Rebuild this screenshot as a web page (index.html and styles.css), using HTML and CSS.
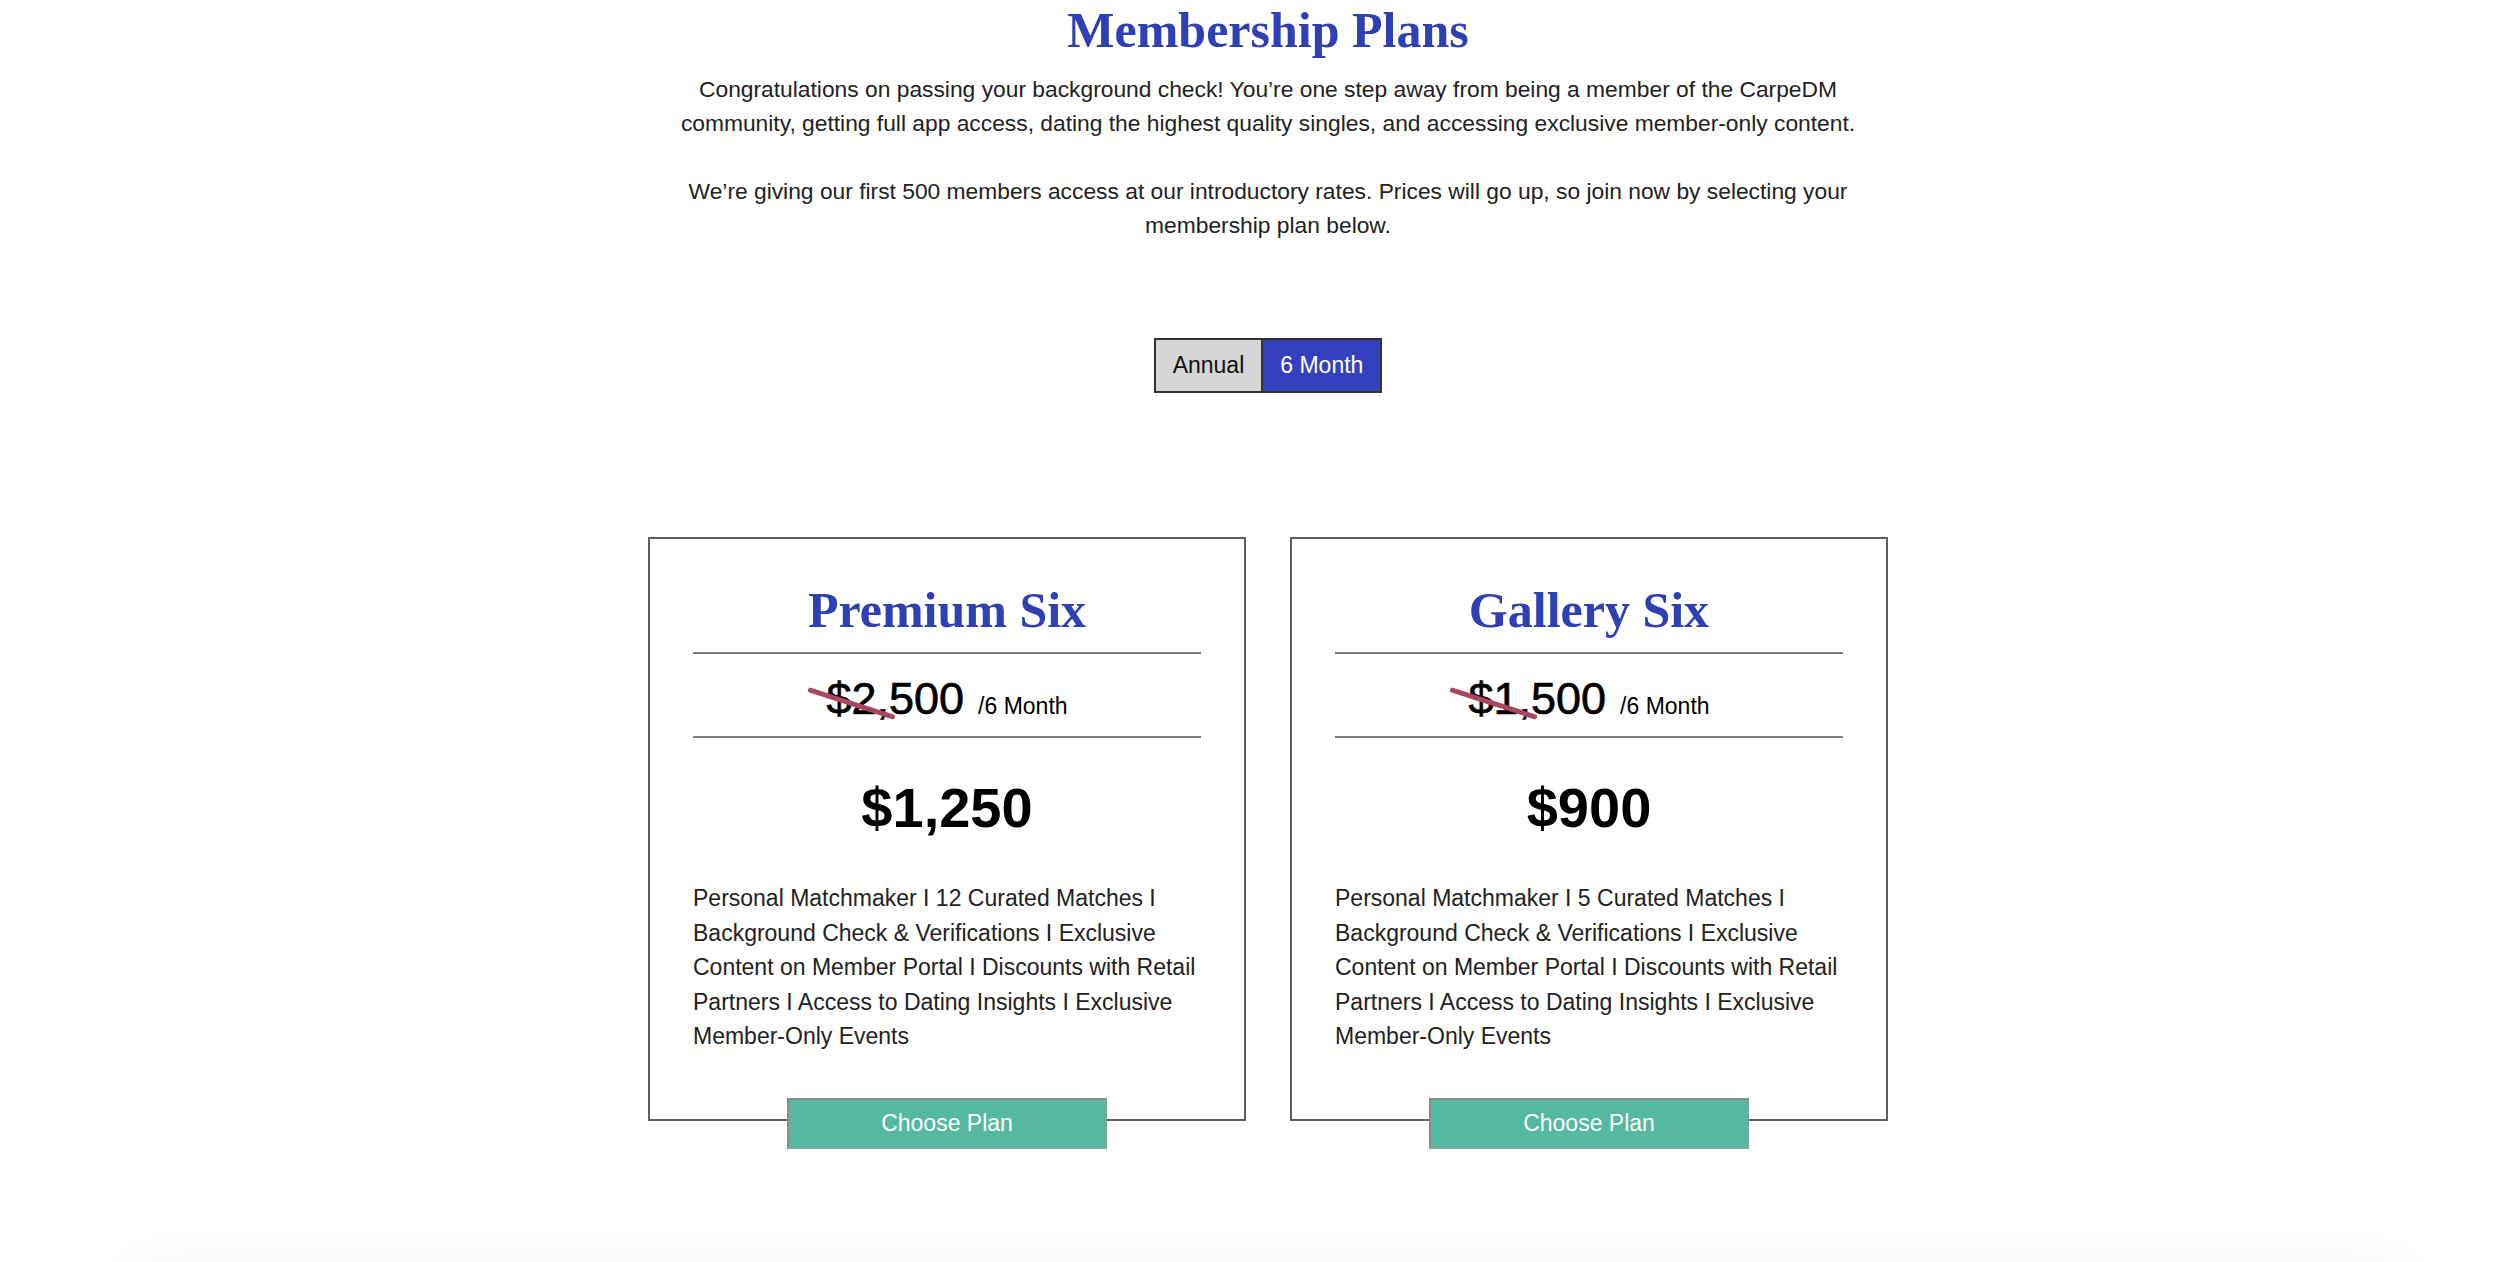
FILE: index.html
```html
<!DOCTYPE html>
<html lang="en">
<head>
    <meta charset="UTF-8">
    <meta name="viewport" content="width=device-width, initial-scale=1.0">
    <title>Membership Plans</title>
    <link rel="stylesheet" href="styles.css">
</head>
<body>
    <main class="plans">
        <h1 class="plans-title">Membership Plans</h1>
        <p class="intro">Congratulations on passing your background check! You’re one step away from being a member of the CarpeDM community, getting full app access, dating the highest quality singles, and accessing exclusive member-only content.</p>
        <p class="intro">We’re giving our first 500 members access at our introductory rates. Prices will go up, so join now by selecting your membership plan below.</p>

        <!-- Переключатель срока -->
        <div class="term-toggle">
            <button class="term">Annual</button>
            <button class="term active">6 Month</button>
        </div>

        <div class="plan-list">
            <div class="plan">
                <h2 class="plan-name">Premium Six</h2>
                <div class="plan-was">
                    <span class="was-price">$2,500</span>
                    <span class="was-term">/6 Month</span>
                </div>
                <div class="plan-price">$1,250</div>
                <p class="plan-perks">Personal Matchmaker I 12 Curated Matches I Background Check &amp; Verifications I Exclusive Content on Member Portal I Discounts with Retail Partners I Access to Dating Insights I Exclusive Member-Only Events</p>
                <button class="choose">Choose Plan</button>
            </div>

            <div class="plan">
                <h2 class="plan-name">Gallery Six</h2>
                <div class="plan-was">
                    <span class="was-price">$1,500</span>
                    <span class="was-term">/6 Month</span>
                </div>
                <div class="plan-price">$900</div>
                <p class="plan-perks">Personal Matchmaker I 5 Curated Matches I Background Check &amp; Verifications I Exclusive Content on Member Portal I Discounts with Retail Partners I Access to Dating Insights I Exclusive Member-Only Events</p>
                <button class="choose">Choose Plan</button>
            </div>
        </div>

        <div class="next-section"></div>
    </main>
</body>
</html>
```

FILE: styles.css
```css
body {
    margin: 0;
    background: #fff;
    color: #222;
    font-family: "Liberation Sans", Arial, sans-serif;
}

.plans {
    padding-left: 22px;
    text-align: center;
}

.plans-title {
    margin: 3px 0 0;
    font-family: "Liberation Serif", "Times New Roman", serif;
    font-size: 50px;
    line-height: 55px;
    font-weight: bold;
    color: #2f3fb4;
}

.intro {
    max-width: 1220px;
    margin: 14px auto 0;
    font-size: 22.8px;
    line-height: 34px;
}

.intro + .intro {
    margin-top: 34px;
}

/* Annual / 6 Month */
.term-toggle {
    display: flex;
    justify-content: center;
    margin-top: 96px;
}

.term {
    padding: 0 17px;
    height: 55px;
    font: inherit;
    font-size: 23px;
    line-height: 51px;
    color: #111;
    background: #d6d6d6;
    border: 2px solid #333;
    cursor: pointer;
}

.term + .term {
    border-left: 0;
}

.term.active {
    background: #3341bf;
    color: #fff;
}

/* Карточки тарифов */
.plan-list {
    display: flex;
    justify-content: center;
    gap: 44px;
    margin-top: 144px;
}

.plan {
    box-sizing: border-box;
    width: 598px;
    padding: 0 43px;
    border: 2px solid #5e5e5e;
    background: #fff;
}

.plan-name {
    margin: 43px 0 0;
    font-family: "Liberation Serif", "Times New Roman", serif;
    font-size: 50px;
    line-height: 56px;
    font-weight: bold;
    color: #2f3fb4;
}

.plan-was {
    display: flex;
    justify-content: center;
    align-items: baseline;
    margin-top: 14px;
    padding: 20px 0 12px;
    border-top: 2px solid #7d7d7d;
    border-bottom: 2px solid #7d7d7d;
    color: #000;
}

.was-price {
    position: relative;
    font-size: 45px;
    line-height: 50px;
    -webkit-text-stroke: 0.7px #000;
}

.was-price::after {
    content: "";
    position: absolute;
    left: -20px;
    top: 27px;
    width: 91px;
    height: 5px;
    border-radius: 2px;
    background: #a94660;
    transform: rotate(17.8deg);
}

.was-term {
    margin-left: 14px;
    font-size: 23px;
    line-height: 34px;
}

.plan-price {
    margin-top: 38px;
    font-size: 56px;
    line-height: 64px;
    font-weight: bold;
    color: #000;
}

.plan-perks {
    margin: 41px 0 0;
    text-align: left;
    font-size: 23px;
    line-height: 34.5px;
}

.choose {
    display: block;
    width: 320px;
    height: 51px;
    margin: 44px auto -30px;
    font: inherit;
    font-size: 23px;
    color: #fff;
    background: #55b9a2;
    border: 2px solid #7fa69c;
    border-top-color: #8a8a8a;
    border-left-color: #8a8a8a;
    cursor: pointer;
}

/* следующий блок, который начинается ниже */
.next-section {
    width: 2260px;
    height: 300px;
    margin: 155px auto 0;
    background: #fff;
    box-shadow: 0 0 60px rgba(0, 0, 0, 0.07);
}
```
